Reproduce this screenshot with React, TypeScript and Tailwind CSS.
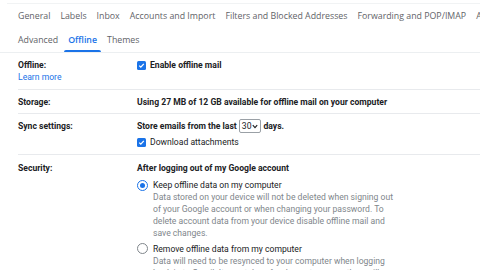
import React from 'react'

const tabsTop = ['General', 'Labels', 'Inbox', 'Accounts and Import', 'Filters and Blocked Addresses', 'Forwarding and POP/IMAP', 'Add-ons']

const Check = () => (
  <span className="inline-flex w-[9px] h-[9px] rounded-[1.5px] bg-[#1a73e8] items-center justify-center shrink-0">
    <svg width="7" height="7" viewBox="0 0 10 10">
      <path d="M1.8 5.2 L4 7.4 L8.3 2.6" stroke="white" strokeWidth="1.8" fill="none" />
    </svg>
  </span>
)

const Radio = ({ on }: { on?: boolean }) => (
  <span
    className={
      on
        ? 'inline-flex w-[11px] h-[11px] rounded-full border-[1.5px] border-[#1a73e8] items-center justify-center shrink-0'
        : 'inline-flex w-[11px] h-[11px] rounded-full border border-[#80868b] shrink-0'
    }
  >
    {on && <span className="w-[5px] h-[5px] rounded-full bg-[#1a73e8]" />}
  </span>
)

export default function App() {
  return (
    <div className="w-[480px] h-[270px] overflow-hidden bg-white text-[#202124] font-['Roboto',sans-serif] text-[8.6px] leading-[12px]">
      {/* tabs */}
      <div className="border-t border-[#f1f3f4] mt-[3px] ml-[7px]" />
      <div className="flex gap-[10px] pl-[18px] pt-[6px] h-[20px] whitespace-nowrap font-['Open_Sans',sans-serif] text-[8.8px] text-[#5f6368]">
        {tabsTop.map((t) => (
          <span key={t}>{t}</span>
        ))}
      </div>
      <div className="flex gap-[10px] pl-[18px] pt-[10px] h-[29px] border-b border-[#eceff1] font-['Open_Sans',sans-serif] text-[8.8px] text-[#5f6368]">
        <span>Advanced</span>
        <span className="relative text-[#1a73e8] font-semibold">
          Offline
          <span className="absolute left-[-4px] right-[-4px] bottom-0 h-[2px] bg-[#1a73e8] rounded-t" />
        </span>
        <span>Themes</span>
      </div>

      <div className="pl-[18px]">
        {/* Offline */}
        <div className="flex pt-[6px] h-[37px] border-b border-[#e8eaed]">
          <div className="w-[119px] font-bold">
            <div>Offline:</div>
            <div className="text-[#1a73e8] font-normal">Learn more</div>
          </div>
          <div className="flex items-center gap-[4px] h-[12px] font-bold">
            <Check />
            <span>Enable offline mail</span>
          </div>
        </div>

        {/* Storage */}
        <div className="flex items-center h-[24px] border-b border-[#e8eaed] font-bold">
          <div className="w-[119px]">Storage:</div>
          <div>Using 27 MB of 12 GB available for offline mail on your computer</div>
        </div>

        {/* Sync */}
        <div className="flex pt-[5px] h-[41px] border-b border-[#e8eaed]">
          <div className="w-[119px] font-bold pt-[1px]">Sync settings:</div>
          <div>
            <div className="flex items-center gap-[2px] font-bold h-[14px]">
              <span>Store emails from the last</span>
              <span className="inline-flex items-center border border-[#9aa0a6] rounded-[2px] px-[2px] h-[14px] font-normal gap-[1px]">
                30
                <svg width="6" height="5" viewBox="0 0 6 5">
                  <path d="M0.8 1.2 L3 3.6 L5.2 1.2" stroke="#202124" strokeWidth="1.2" fill="none" />
                </svg>
              </span>
              <span>days.</span>
            </div>
            <div className="flex items-center gap-[4px] mt-[3px]">
              <Check />
              <span>Download attachments</span>
            </div>
          </div>
        </div>

        {/* Security */}
        <div className="flex pt-[7px]">
          <div className="w-[119px] font-bold">Security:</div>
          <div>
            <div className="font-bold">After logging out of my Google account</div>
            <div className="flex gap-[5px] mt-[5px]">
              <div>
                <Radio on />
              </div>
              <div>
                <div>Keep offline data on my computer</div>
                <div className="text-[#80868b] w-[246px]">
                  Data stored on your device will not be deleted when signing out of your Google account or when
                  changing your password. To delete account data from your device disable offline mail and save
                  changes.
                </div>
              </div>
            </div>
            <div className="flex gap-[5px] mt-[4px]">
              <div>
                <Radio />
              </div>
              <div>
                <div>Remove offline data from my computer</div>
                <div className="text-[#80868b] w-[246px]">
                  Data will need to be resynced to your computer when logging back in to Gmail. It may take a few
                  hours to resync the mailbox.
                </div>
              </div>
            </div>
          </div>
        </div>
      </div>
    </div>
  )
}
